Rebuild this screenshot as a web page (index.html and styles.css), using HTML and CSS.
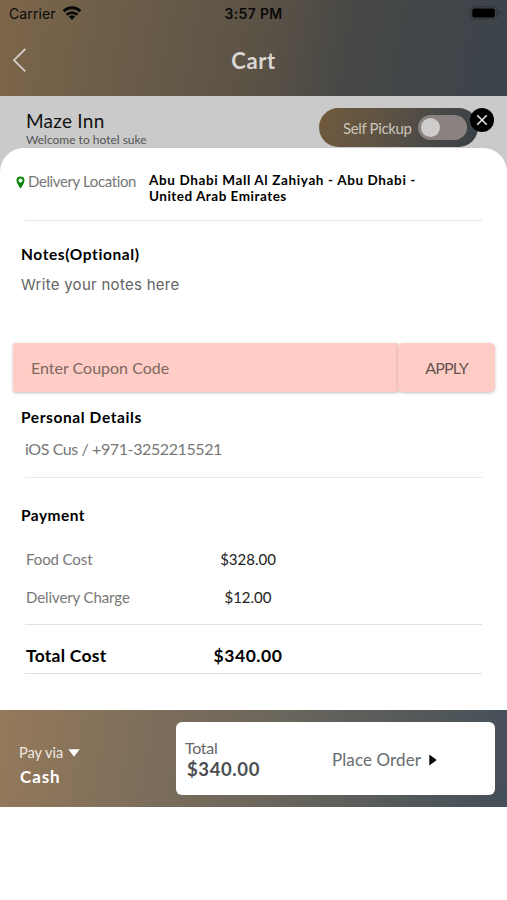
FILE: index.html
```html
<!DOCTYPE html>
<html lang="en">
<head>
<meta charset="utf-8">
<title>Cart</title>
<link rel="stylesheet" href="styles.css">
</head>
<body>
<header class="header">
  <div class="status">
    <div class="carrier"><span class="carrier-name">Carrier</span>
      <svg class="wifi" width="20" height="16" viewBox="0 0 20 16"><g fill="none" stroke="#080808" stroke-width="2.8"><path d="M1.6 6.2a12 12 0 0 1 16.8 0"/><path d="M4.7 9.7a7.6 7.6 0 0 1 10.6 0"/></g><path d="M6.9 11.8a4.5 4.5 0 0 1 6.2 0L10 15z" fill="#080808"/></svg>
    </div>
    <span class="time">3:57 PM</span>
    <svg class="battery" width="32" height="14" viewBox="0 0 32 14"><rect x=".8" y=".8" width="26" height="12.2" rx="3.6" fill="none" stroke="#303437" stroke-width="1.1"/><rect x="2.3" y="2.5" width="22.6" height="9" rx="2" fill="#000"/><path d="M28.3 4.8q2 .6 2 2.2t-2 2.2z" fill="#303437"/></svg>
  </div>
  <div class="nav">
    <svg class="back" width="16" height="26" viewBox="0 0 16 26"><path d="M13.3 2 2 13.2 13.3 24.4" fill="none" stroke="#d2cdc6" stroke-width="1.8"/></svg>
    <h1 class="title">Cart</h1>
  </div>
</header>

<section class="restaurant">
  <div class="place">
    <div class="place-name">Maze Inn</div>
    <div class="place-note">Welcome to hotel suke</div>
  </div>
  <div class="pickup">
    <span class="pickup-label">Self Pickup</span>
    <span class="toggle"><span class="knob"></span></span>
    <button class="close" aria-label="Close"><svg width="12" height="12" viewBox="0 0 12 12"><path d="M1.2 1.2 10.8 10.8M10.8 1.2 1.2 10.8" stroke="#e4e4e4" stroke-width="1.6"/></svg></button>
  </div>
</section>

<main class="sheet">
  <section class="location">
    <svg class="pin" width="9" height="13" viewBox="0 0 9 13"><path fill="#0b870b" fill-rule="evenodd" d="M4.5.5a4 4 0 0 0-4 4C.5 7.4 4.5 12.5 4.5 12.5s4-5.100 4-8a4 4 0 0 0-4-4zm0 2.100a2 2 0 1 1 0 4 2 2 0 0 1 0-4z"/></svg>
    <span class="location-label">Delivery Location</span>
    <div class="address"><div class="address-one">Abu Dhabi Mall Al Zahiyah - Abu Dhabi -</div><div class="address-two">United Arab Emirates</div></div>
  </section>
  <section class="notes">
    <h2 class="heading notes-heading">Notes(Optional)</h2>
    <div class="notes-input">Write your notes here</div>
  </section>
  <section class="coupon">
    <div class="coupon-field"><span class="coupon-text">Enter Coupon Code</span></div>
    <button class="apply"><span class="apply-text">APPLY</span></button>
  </section>
  <section class="personal">
    <h2 class="heading personal-heading">Personal Details</h2>
    <div class="contact"><span class="contact-text">iOS Cus / +971-3252215521</span></div>
  </section>
  <section class="payment">
    <h2 class="heading payment-heading">Payment</h2>
    <div class="costs">
      <div class="row"><span class="food">Food Cost</span><span class="amount"><span class="food-amount">$328.00</span></span></div>
      <div class="row"><span class="charge">Delivery Charge</span><span class="amount"><span class="charge-amount">$12.00</span></span></div>
    </div>
    <div class="row total"><span class="total-label">Total Cost</span><span class="amount"><span class="total-amount">$340.00</span></span></div>
  </section>
</main>

<footer class="footer">
  <div class="pay">
    <div class="pay-via"><span class="pay-label">Pay via</span><svg width="12" height="8" viewBox="0 0 12 8"><path d="M.4.3h11.200L6 7.700z" fill="#fff"/></svg></div>
    <div class="cash"><span class="cash-text">Cash</span></div>
  </div>
  <div class="order">
    <div class="order-total"><div><span class="order-label">Total</span></div><div class="order-sum"><span class="order-amount">$340.00</span></div></div>
    <div class="place-order"><span class="place-order-text">Place Order</span><svg width="8" height="12" viewBox="0 0 8 12"><path d="M.3.4 7.700 6 .3 11.600z" fill="#000"/></svg></div>
  </div>
</footer>
</body>
</html>
```
FILE: styles.css
```css
* { box-sizing: border-box; }
body { margin: 0; height: 900px; background: #fff; font-family: Lato, "Liberation Sans", sans-serif; font-variant-ligatures: none; color: #000; white-space: nowrap; overflow: hidden; }
h1, h2 { margin: 0; }
button { border: 0; padding: 0; font: inherit; }
svg { display: block; flex: none; }

.header { height: 96px; background: linear-gradient(100deg, #7d664a 0%, #605747 40%, #5a5146 53%, #474846 68%, #3b434b 100%); }
.status { height: 28px; display: grid; grid-template-columns: 1fr auto 1fr; align-items: center; padding: 0 5px 0 9px; font-family: Inter, sans-serif; font-size: 14px; color: #0a0a0a; }
.carrier { display: flex; align-items: center; gap: 6px; }
.carrier-name { margin-top: -1px; letter-spacing: .1px; }
.wifi { margin-top: -3px; }
.time { font-weight: 600; margin-top: -1px; padding-right: 4px; letter-spacing: .35px; }
.battery { justify-self: end; margin-top: -2px; }
.nav { height: 66px; display: grid; grid-template-columns: 1fr auto 1fr; align-items: center; padding: 0 12px; }
.back { margin-top: -3px; }
.title { color: #dad7d3; font-size: 22px; line-height: 30px; font-weight: 700; letter-spacing: .6px; }

.restaurant { height: 82px; margin-bottom: -30px; background: #cacaca; padding: 12px 12px 0 26px; display: flex; justify-content: space-between; }
.place-name { font-size: 19px; line-height: 26px; letter-spacing: .25px; color: #111; }
.place-note { font-size: 12px; line-height: 12px; color: #555; }
.pickup { width: 159px; height: 39px; margin-right: 17px; border-radius: 20px; background: linear-gradient(110deg, #715a3c 0%, #5e5344 40%, #464847 75%, #373f45 100%); display: flex; align-items: center; justify-content: space-between; padding: 0 11px 0 24px; position: relative; }
.pickup-label { font-size: 15px; letter-spacing: -.35px; color: #cbc4bb; }
.toggle { width: 49px; height: 25px; border-radius: 13px; background: #8b8180; padding: 3px; }
.knob { display: block; width: 19px; height: 19px; border-radius: 50%; background: #cfcdcc; }
.close { position: absolute; left: 151px; top: 0; width: 24px; height: 24px; border-radius: 50%; background: #000; display: flex; align-items: center; justify-content: center; }

.sheet { position: relative; height: 562px; background: #fff; border-radius: 24px 24px 0 0; padding: 18px 25px 0; }
.location { height: 55px; background: linear-gradient(#e6e6e6, #e6e6e6) 9px 100% / 100% 1px no-repeat; margin-left: -9px; display: flex; align-items: flex-start; padding-top: 6px; }
.pin { margin: 4px 3px 0 0; }
.location-label { width: 121px; margin-top: -1px; font-size: 15px; line-height: 20px; letter-spacing: -.38px; color: #777; }
.address { font-size: 13.5px; line-height: 16px; font-weight: 700; }
.address-one { letter-spacing: .63px; }
.address-two { letter-spacing: .5px; }
.address { margin-top: 0; }
.heading { margin: -1px 0 1px -4px; font-size: 15.5px; line-height: 22px; font-weight: 700; letter-spacing: .6px; }
.payment-heading { letter-spacing: .45px; }
.notes { height: 122px; padding-top: 23px; }
.notes-input { margin: 9px 0 0 -4px; font-family: Inter, sans-serif; font-size: 15px; line-height: 22px; letter-spacing: .28px; color: #646464; }
.coupon { height: 49px; margin: 0 -13px 0 -12px; display: flex; }
.coupon-field, .apply { background: #ffcdc5; box-shadow: 0 1px 3px rgba(0,0,0,.25); display: flex; align-items: center; }
.coupon-field { flex: 1; border-radius: 2px 0 0 2px; padding-left: 18px; font-size: 16px; color: #806761; }
.apply { width: 97px; border-radius: 5px; justify-content: center; font-size: 16px; letter-spacing: -.8px; color: #665553; }
.personal { height: 86px; padding-top: 15px; border-bottom: 1px solid #e9e9e9; }
.contact { margin-top: 11px; font-size: 16px; line-height: 20px; letter-spacing: -.4px; color: #777; }
.payment { padding-top: 27px; }
.costs { height: 98px; padding-top: 13px; border-bottom: 1px solid #e0e0e0; }
.row { display: grid; grid-template-columns: 140px 166px; align-items: center; height: 38px; font-size: 15px; color: #777; }
.food, .charge { padding-left: 1px; letter-spacing: -.1px; }
.amount { text-align: center; color: #222; }
.total { grid-template-columns: 140px 166px auto; height: 49px; padding-top: 12px; font-size: 17.5px; font-weight: 700; color: #000; border-bottom: 1px solid #e0e0e0; }
.total-label { padding-left: 1px; letter-spacing: .25px; }
.total .amount { color: #000; letter-spacing: .55px; }

.footer { height: 97px; background: linear-gradient(100deg, #95795a 0%, #7b6d5b 32%, #69655c 56%, #555a5a 78%, #454f59 100%); display: flex; padding: 12px 12px 12px 20px; }
.pay { width: 156px; padding-top: 20px; color: #fff; }
.pay-via { display: flex; align-items: center; gap: 5px; margin-left: -1px; font-size: 14.5px; line-height: 22px; color: #eee9e3; }
.cash { margin-top: 1px; font-size: 17px; line-height: 24px; font-weight: 700; letter-spacing: .9px; }
.order { flex: 1; border-radius: 6px; background: #fff; display: flex; padding-left: 9px; }
.order-total { width: 147px; padding-top: 16px; font-size: 16px; line-height: 20px; letter-spacing: -.3px; color: #666; }
.order-sum { padding-left: 2px; font-size: 18.5px; line-height: 22px; font-weight: 700; letter-spacing: .6px; color: #4b4e51; }
.place-order { display: flex; align-items: center; gap: 8px; height: 75px; font-size: 17px; letter-spacing: .1px; color: #666c70; }
```
